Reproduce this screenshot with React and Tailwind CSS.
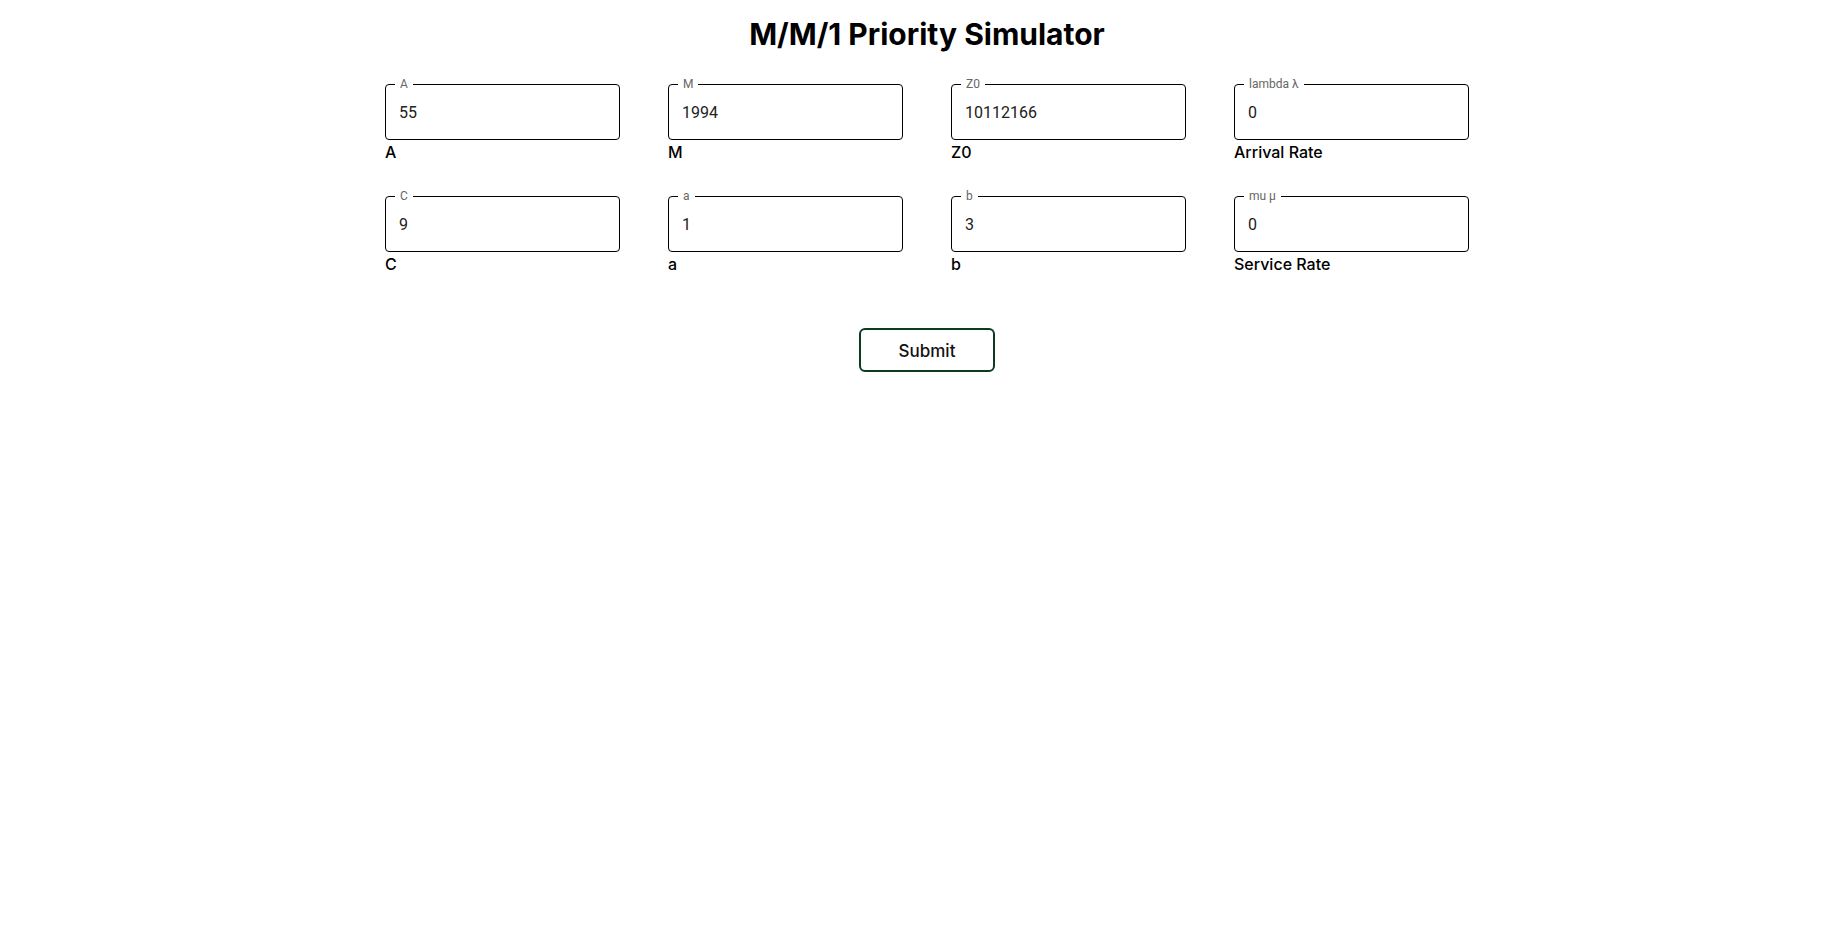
import { useState } from 'react'

const fields = [
  { key: 'A', legend: 'A', label: 'A', value: '55' },
  { key: 'M', legend: 'M', label: 'M', value: '1994' },
  { key: 'Z0', legend: 'Z0', label: 'Z0', value: '10112166' },
  { key: 'lambda', legend: 'lambda λ', label: 'Arrival Rate', value: '0' },
  { key: 'C', legend: 'C', label: 'C', value: '9' },
  { key: 'a', legend: 'a', label: 'a', value: '1' },
  { key: 'b', legend: 'b', label: 'b', value: '3' },
  { key: 'mu', legend: 'mu μ', label: 'Service Rate', value: '0' },
]

function Field({ legend, label, value, onChange }) {
  return (
    <div className="flex flex-col">
      <div className="relative h-14 rounded-[4px] border border-black font-['Roboto',sans-serif]">
        <span className="absolute -top-[7px] left-[9px] bg-white px-[5px] text-[12px] leading-none text-[#666]">{legend}</span>
        <input
          value={value}
          onChange={(e) => onChange(e.target.value)}
          className="h-full w-full bg-transparent px-[13px] text-base text-[#212121] outline-none"
        />
      </div>
      <div className="text-base font-medium leading-6 text-black">{label}</div>
    </div>
  )
}

export default function App() {
  const [values, setValues] = useState(Object.fromEntries(fields.map(f => [f.key, f.value])))
  const update = (key, v) => setValues({ ...values, [key]: v })
  return (
    <div className="min-h-screen bg-white pl-[19px] font-['Inter','Noto_Sans',sans-serif]">
      <h1 className="mt-4 text-center text-[30px] font-bold leading-9 text-black">M/M/1 Priority Simulator</h1>
      <div className="mt-8 grid grid-cols-[repeat(4,235px)] justify-center gap-x-12 gap-y-8">
        {fields.map(f => (
          <Field key={f.key} legend={f.legend} label={f.label} value={values[f.key]} onChange={(v) => update(f.key, v)} />
        ))}
      </div>
      <div className="mt-[52px] flex justify-center">
        <button className="h-11 w-[136px] rounded-md border-2 border-[#0c3b22] bg-white pt-1 text-[17px] font-medium text-[#111]">Submit</button>
      </div>
    </div>
  )
}
